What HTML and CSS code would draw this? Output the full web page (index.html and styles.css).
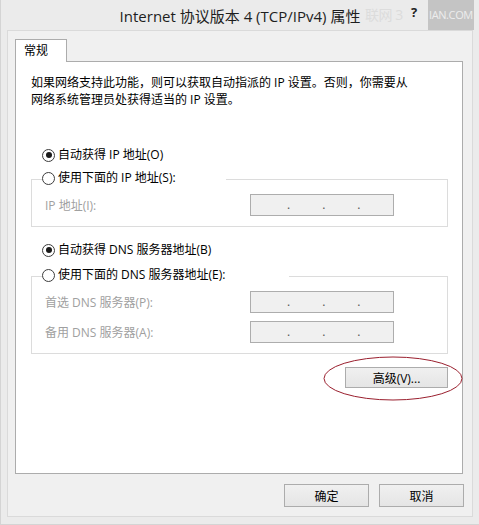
FILE: index.html
```html
<!DOCTYPE html>
<html lang="zh-CN">
<head>
  <meta charset="UTF-8">
  <meta name="viewport" content="width=device-width, initial-scale=1.0">
  <title>Internet 协议版本 4 (TCP/IPv4) 属性</title>
  <link rel="stylesheet" href="styles.css">
</head>
<body>

  <div class="window">
    <div class="titlebar">
      <span class="title">Internet 协议版本 4 (TCP/IPv4) 属性</span>
      <span class="watermark wm-left">联网 3</span>
      <span class="help">?</span>
      <span class="watermark wm-box">IAN.COM</span>
    </div>

    <div class="client">
      <div class="tabs">
        <div class="tab">常规</div>
      </div>

      <div class="panel">
        <p class="desc">如果网络支持此功能，则可以获取自动指派的 IP 设置。否则，你需要从<br>网络系统管理员处获得适当的 IP 设置。</p>

        <div class="option first"><span class="radio checked"></span>自动获得 IP 地址(O)</div>
        <fieldset class="group">
          <legend class="option legend-ip"><span class="radio"></span>使用下面的 IP 地址(S):</legend>
          <div class="field">
            <span class="label">IP 地址(I):</span>
            <span class="ip"><i>.</i><i>.</i><i>.</i></span>
          </div>
        </fieldset>

        <div class="option dns"><span class="radio checked"></span>自动获得 DNS 服务器地址(B)</div>
        <fieldset class="group group-dns">
          <legend class="option legend-dns"><span class="radio"></span>使用下面的 DNS 服务器地址(E):</legend>
          <div class="field">
            <span class="label">首选 DNS 服务器(P):</span>
            <span class="ip"><i>.</i><i>.</i><i>.</i></span>
          </div>
          <div class="field">
            <span class="label">备用 DNS 服务器(A):</span>
            <span class="ip"><i>.</i><i>.</i><i>.</i></span>
          </div>
        </fieldset>

        <div class="advanced-row">
          <span class="advanced-wrap">
            <button class="btn advanced">高级(V)...</button>
            <!-- 红色圈注 -->
            <svg class="mark" width="140" height="45" viewBox="0 0 140 45">
              <ellipse cx="70" cy="22.5" rx="69" ry="21.5" fill="none" stroke="#9a1f2e" stroke-width="1"/>
            </svg>
          </span>
        </div>
      </div>

      <div class="footer">
        <button class="btn">确定</button>
        <button class="btn">取消</button>
      </div>
    </div>
  </div>

</body>
</html>
```

FILE: styles.css
```css
body {
  margin: 0;
  background-color: #ebebeb;
  font-family: "Open Sans", "Noto Sans CJK SC", sans-serif;
  font-size: 12px;
  color: #000;
}

.window {
  width: 479px;
  height: 525px;
  box-sizing: border-box;
  background-color: #ebebeb;
  border-left: 1px solid #d4d4d4;
  border-bottom: 1px solid #d4d4d4;
}

.titlebar {
  position: relative;
  height: 30px;
  line-height: 30px;
  text-align: center;
  font-size: 15px;
  color: #1e1e1e;
}

.title {
  position: relative;
  top: 1px;
}

.help {
  position: absolute;
  left: 410px;
  top: -3px;
  font-size: 13px;
  font-weight: bold;
  color: #222;
}

/* marca d'água do site */
.watermark {
  position: absolute;
  top: 0;
  height: 30px;
  white-space: nowrap;
}

.wm-left {
  left: 364px;
  font-size: 14px;
  letter-spacing: -0.5px;
  color: #dcdcdc;
}

.wm-box {
  left: 427px;
  padding: 0 1px;
  font-size: 11px;
  letter-spacing: -0.4px;
  background-color: #c4c4c4;
  color: #ededed;
}

.client {
  height: 487px;
  margin: 0 6px 0 6px;
  box-sizing: border-box;
  border: 1px solid #dadada;
  background-color: #f0f0f0;
  padding: 8px 9px 0 7px;
}

.tabs {
  display: flex;
}

.tab {
  position: relative;
  z-index: 1;
  width: 52px;
  height: 23px;
  box-sizing: border-box;
  margin-bottom: -1px;
  padding-left: 8px;
  border: 1px solid #acacac;
  border-bottom: none;
  background-color: #fff;
  line-height: 21px;
}

.panel {
  height: 413px;
  box-sizing: border-box;
  border: 1px solid #acacac;
  background-color: #fff;
  padding: 12px 14px 0 15px;
}

.desc {
  margin: 0;
  line-height: 17px;
}

.option {
  display: flex;
  align-items: center;
  gap: 3px;
  line-height: 20px;
  height: 20px;
}

.option.first {
  margin: 37px 0 0 11px;
}

.option.dns {
  margin: 13px 0 0 11px;
}

.radio {
  width: 13px;
  height: 13px;
  box-sizing: border-box;
  border: 1px solid #3c3c3c;
  border-radius: 50%;
  display: flex;
  align-items: center;
  justify-content: center;
  background-color: #fff;
}

.radio.checked::after {
  content: "";
  width: 6px;
  height: 6px;
  border-radius: 50%;
  background-color: #1a1a1a;
}

.group {
  margin: 3px 0 0 0;
  border: 1px solid #dcdcdc;
  padding: 3px 52px 10px 10px;
}

.group-dns {
  margin-top: 5px;
}

.group legend {
  padding: 0 0 3px 0;
  box-sizing: content-box;
}

.legend-ip {
  width: 184px;
}

.legend-dns {
  width: 247px;
}

.field {
  display: grid;
  grid-template-columns: 205px 144px;
  align-items: center;
  padding-left: 3px;
  color: #a0a0a0;
}

.field + .field {
  margin-top: 8px;
}

.ip {
  height: 22px;
  box-sizing: border-box;
  border: 1px solid #adadad;
  background-color: #f0f0f0;
  display: flex;
  padding-left: 36px;
  gap: 32px;
  line-height: 20px;
  color: #555;
}

.ip i {
  font-style: normal;
}

.advanced-row {
  display: flex;
  justify-content: flex-end;
  margin-top: 13px;
}

.advanced-wrap {
  position: relative;
}

.mark {
  position: absolute;
  left: -22px;
  top: -11px;
  pointer-events: none;
}

.btn {
  font-family: inherit;
  font-size: 12px;
  color: #000;
  width: 85px;
  height: 23px;
  padding: 0;
  border: 1px solid #acacac;
  background: linear-gradient(#f0f0f0, #e5e5e5);
  border-radius: 0;
}

.btn.advanced {
  width: 103px;
  height: 21px;
  display: block;
}

.footer {
  display: flex;
  justify-content: flex-end;
  gap: 10px;
  margin: 10px -1px 0 0;
}
```
